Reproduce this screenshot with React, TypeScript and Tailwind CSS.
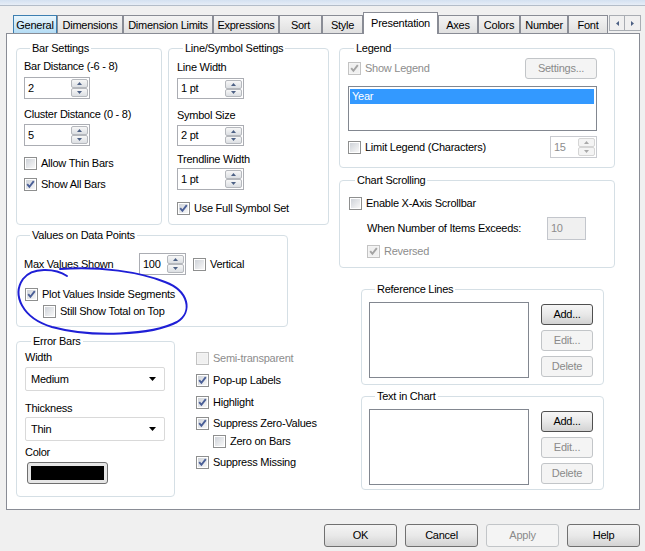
import React from "react";

type CheckProps = { checked?: boolean; disabled?: boolean };

const Check = ({ checked, disabled }: CheckProps) => (
  <span
    className={
      disabled
        ? "relative flex h-[13px] w-[13px] shrink-0 items-center justify-center border border-[#c3c3c3] bg-[#f4f4f4]"
        : "relative flex h-[13px] w-[13px] shrink-0 items-center justify-center border border-[#8e8f8f] bg-white"
    }
  >
    <span
      className={
        disabled
          ? "h-[9px] w-[9px] bg-[#f0f0f0]"
          : "h-[9px] w-[9px] bg-gradient-to-br from-[#cfd3d9] to-[#f8f8f8]"
      }
    />
    {checked && (
      <svg className="absolute left-0 top-0" width="11" height="11" viewBox="0 0 11 11">
        <path
          d="M2.2 5.2 L4.4 7.8 L8.8 2.2"
          fill="none"
          stroke={disabled ? "#a3a3a3" : "#4a5f97"}
          strokeWidth="1.9"
        />
      </svg>
    )}
  </span>
);

const CheckRow = ({
  label,
  checked,
  disabled,
  className = "",
}: CheckProps & { label: string; className?: string }) => (
  <div className={`flex h-[13px] items-center ${className}`}>
    <Check checked={checked} disabled={disabled} />
    <span className={disabled ? "ml-[4px] leading-[13px] text-[#8d8d8d]" : "ml-[4px] leading-[13px]"}>
      {label}
    </span>
  </div>
);

const SpinBtn = ({ up, disabled }: { up?: boolean; disabled?: boolean }) => (
  <div
    className={
      disabled
        ? "flex flex-1 items-center justify-center rounded-[2px] border border-[#d5d5d5] bg-[#f4f4f4]"
        : "flex flex-1 items-center justify-center rounded-[2px] border border-[#b5b8bd] bg-gradient-to-b from-[#f7f7f7] to-[#dcdfe3]"
    }
  >
    <svg width="5" height="3" viewBox="0 0 5 3">
      <path d={up ? "M0 3 L2.5 0 L5 3 Z" : "M0 0 L2.5 3 L5 0 Z"} fill={disabled ? "#a9a9a9" : "#4d6185"} />
    </svg>
  </div>
);

const Spin = ({
  value,
  className = "",
  disabled,
}: {
  value: string;
  className?: string;
  disabled?: boolean;
}) => (
  <div
    className={
      disabled
        ? `flex border border-[#c9cbd0] bg-white ${className}`
        : `flex border border-[#abadb3] bg-white ${className}`
    }
  >
    <span className={disabled ? "flex flex-1 items-center pl-[3px] text-[#8d8d8d]" : "flex flex-1 items-center pl-[3px]"}>
      {value}
    </span>
    <div className="my-[1px] mr-[1px] flex w-[17px] flex-col">
      <SpinBtn up disabled={disabled} />
      <SpinBtn disabled={disabled} />
    </div>
  </div>
);

const Select = ({ value }: { value: string }) => (
  <div className="flex h-[24px] w-[140px] items-center justify-between rounded-[2px] border border-[#d9d9d9] bg-white pl-[5px] pr-[8px]">
    <span>{value}</span>
    <svg width="7" height="4" viewBox="0 0 7 4">
      <path d="M0 0 L7 0 L3.5 4 Z" fill="#000" />
    </svg>
  </div>
);

const Btn = ({
  children,
  className = "",
  disabled,
  strong,
}: {
  children: React.ReactNode;
  className?: string;
  disabled?: boolean;
  strong?: boolean;
}) => {
  if (disabled)
    return (
      <div
        className={`flex items-center justify-center rounded-[3px] border border-[#c2c5c8] bg-[#f4f4f4] text-[#8a8a8a] ${className}`}
      >
        {children}
      </div>
    );
  return (
    <div
      className={
        strong
          ? `flex items-center justify-center rounded-[3px] border border-[#4f4f4f] bg-gradient-to-b from-[#f6f6f6] via-[#e8e8e8] to-[#d2d2d2] ${className}`
          : `flex items-center justify-center rounded-[3px] border border-[#707070] bg-gradient-to-b from-[#f4f4f4] via-[#e9e9e9] to-[#d3d3d3] ${className}`
      }
    >
      {children}
    </div>
  );
};

const Group = ({
  title,
  className = "",
  children,
}: {
  title: string;
  className?: string;
  children?: React.ReactNode;
}) => (
  <div className={`rounded-[4px] border border-[#d5dfe5] ${className}`}>
    <div className="-mt-[7px] ml-[6px] w-fit bg-white px-[2px] leading-[13px]">{title}</div>
    {children}
  </div>
);

const tabs = [
  { name: "General", w: "w-[44px]" },
  { name: "Dimensions", w: "w-[66px]" },
  { name: "Dimension Limits", w: "w-[90px]" },
  { name: "Expressions", w: "w-[66px]" },
  { name: "Sort", w: "w-[43px]" },
  { name: "Style", w: "w-[41px]" },
  { name: "Presentation", w: "w-[75px]" },
  { name: "Axes", w: "w-[40px]" },
  { name: "Colors", w: "w-[42px]" },
  { name: "Number", w: "w-[48px]" },
  { name: "Font", w: "w-[40px]" },
];

const TabBar = () => (
  <div className="mt-[6px] flex h-[21px] items-end pl-[13px]">
    {tabs.map((t) => {
      if (t.name === "Presentation")
        return (
          <div
            key={t.name}
            className={`relative z-10 -mb-[1px] flex h-[22px] items-center justify-center border border-b-0 border-[#898c95] bg-white pb-[1px] ${t.w}`}
          >
            {t.name}
          </div>
        );
      if (t.name === "General")
        return (
          <div
            key={t.name}
            className={`flex h-[18px] items-center justify-center border border-b-0 border-[#3c7fb1] bg-gradient-to-b from-[#eaf6fd] to-[#b3dcf4] pt-[2px] ${t.w}`}
          >
            {t.name}
          </div>
        );
      return (
        <div
          key={t.name}
          className={`flex h-[18px] items-center justify-center border border-b-0 border-[#898c95] bg-gradient-to-b from-[#f4f4f4] to-[#e0e0e0] pt-[2px] ${t.w}`}
        >
          {t.name}
        </div>
      );
    })}
    <div className="mb-[2px] ml-[1px] flex">
      <div className="flex h-[16px] w-[16px] items-center justify-center border border-[#a9adb3] bg-[#f0f0f0]">
        <svg width="3" height="5" viewBox="0 0 3 5">
          <path d="M3 0 L0 2.5 L3 5 Z" fill="#4d6185" />
        </svg>
      </div>
      <div className="flex h-[16px] w-[16px] items-center justify-center border border-l-0 border-[#a9adb3] bg-[#f0f0f0]">
        <svg width="3" height="5" viewBox="0 0 3 5">
          <path d="M0 0 L3 2.5 L0 5 Z" fill="#4d6185" />
        </svg>
      </div>
    </div>
  </div>
);

const LeftColumn = () => (
  <div className="flex w-[313px] flex-col">
    <div className="flex">
      <Group title="Bar Settings" className="h-[177px] w-[146px] pl-[7px]">
        <div className="mt-[5px] leading-[13px]">Bar Distance (-6 - 8)</div>
        <Spin value="2" className="mt-[4px] h-[22px] w-[66px]" />
        <div className="mt-[9px] leading-[13px]">Cluster Distance (0 - 8)</div>
        <Spin value="5" className="mt-[3px] h-[22px] w-[66px]" />
        <CheckRow label="Allow Thin Bars" className="mt-[11px]" />
        <CheckRow label="Show All Bars" checked className="mt-[8px]" />
      </Group>
      <Group title="Line/Symbol Settings" className="ml-[6px] h-[177px] w-[161px] pl-[8px]">
        <div className="mt-[6px] leading-[13px]">Line Width</div>
        <Spin value="1 pt" className="mt-[4px] h-[21px] w-[67px]" />
        <div className="mt-[10px] leading-[13px]">Symbol Size</div>
        <Spin value="2 pt" className="mt-[3px] h-[21px] w-[67px]" />
        <div className="mt-[7px] leading-[13px]">Trendline Width</div>
        <Spin value="1 pt" className="mt-[2px] h-[22px] w-[67px]" />
        <CheckRow label="Use Full Symbol Set" checked className="mt-[12px]" />
      </Group>
    </div>

    <Group title="Values on Data Points" className="mt-[10px] h-[92px] w-[272px] pl-[7px]">
      <div className="mt-[11px] flex h-[22px] items-center">
        <span className="w-[115px]">Max Values Shown</span>
        <Spin value="100" className="h-[22px] w-[47px]" />
        <CheckRow label="Vertical" className="ml-[7px]" />
      </div>
      <CheckRow label="Plot Values Inside Segments" checked className="ml-[1px] mt-[13px]" />
      <CheckRow label="Still Show Total on Top" className="ml-[19px] mt-[4px]" />
    </Group>

    <div className="mt-[14px] flex">
      <Group title="Error Bars" className="h-[156px] w-[159px] pl-[8px]">
        <div className="mt-[3px] leading-[13px]">Width</div>
        <div className="mt-[3px]">
          <Select value="Medium" />
        </div>
        <div className="mt-[11px] leading-[13px]">Thickness</div>
        <div className="mt-[2px]">
          <Select value="Thin" />
        </div>
        <div className="mt-[5px] leading-[13px]">Color</div>
        <div className="ml-[2px] mt-[3px] h-[22px] w-[81px] rounded-[3px] border border-[#6f6f6f] bg-[#e6e6e6] p-[3px]">
          <div className="h-full w-full bg-black" />
        </div>
      </Group>
      <div className="ml-[21px] mt-[11px] flex flex-col">
        <CheckRow label="Semi-transparent" disabled />
        <CheckRow label="Pop-up Labels" checked className="mt-[9px]" />
        <CheckRow label="Highlight" checked className="mt-[9px]" />
        <CheckRow label="Suppress Zero-Values" checked className="mt-[8px]" />
        <CheckRow label="Zero on Bars" className="ml-[17px] mt-[5px]" />
        <CheckRow label="Suppress Missing" checked className="mt-[8px]" />
      </div>
    </div>
  </div>
);

const ListWithButtons = () => (
  <div className="mt-[6px] flex">
    <div className="h-[76px] w-[160px] border border-[#828790] bg-white" />
    <div className="ml-[12px] mt-[2px] flex flex-col gap-[5px]">
      <Btn strong className="h-[21px] w-[52px]">Add...</Btn>
      <Btn disabled className="h-[21px] w-[52px]">Edit...</Btn>
      <Btn disabled className="h-[21px] w-[52px]">Delete</Btn>
    </div>
  </div>
);

const RightColumn = () => (
  <div className="ml-[10px] flex w-[276px] flex-col">
    <Group title="Legend" className="h-[120px] w-[276px] pl-[8px] pr-[17px]">
      <div className="mt-[3px] flex h-[21px] items-center justify-between">
        <CheckRow label="Show Legend" checked disabled />
        <Btn disabled className="h-[21px] w-[72px]">Settings...</Btn>
      </div>
      <div className="mt-[7px] h-[45px] w-[249px] border border-[#828790] bg-white p-[2px] pl-[1px]">
        <div className="h-[15px] bg-[#3399ff] pl-[2px] leading-[15px] text-white">Year</div>
      </div>
      <div className="mt-[5px] flex h-[22px] items-center justify-between">
        <CheckRow label="Limit Legend (Characters)" />
        <Spin value="15" disabled className="h-[22px] w-[47px]" />
      </div>
    </Group>

    <Group title="Chart Scrolling" className="mt-[12px] h-[88px] w-[276px] pl-[9px]">
      <CheckRow label="Enable X-Axis Scrollbar" className="mt-[10px]" />
      <div className="ml-[18px] mt-[7px] flex h-[23px] items-center">
        <span className="w-[180px]">When Number of Items Exceeds:</span>
        <div className="h-[23px] w-[39px] border border-[#c3c6cc] bg-[#f0f0f0] pl-[3px] pt-[2px] text-[#8d8d8d]">10</div>
      </div>
      <CheckRow label="Reversed" checked disabled className="ml-[18px] mt-[5px]" />
    </Group>

    <Group title="Reference Lines" className="ml-[22px] mt-[21px] h-[96px] w-[243px] pl-[7px]">
      <ListWithButtons />
    </Group>

    <Group title="Text in Chart" className="ml-[22px] mt-[11px] h-[94px] w-[243px] pl-[7px]">
      <ListWithButtons />
    </Group>
  </div>
);

const App = () => {
  return (
    <div className="relative h-[551px] w-[645px] overflow-hidden bg-[#f0f0f0] font-['Liberation_Sans',Arial,sans-serif] text-[11px] tracking-[-0.25px] text-black">
      <div className="h-[6px] border-b border-[#b3bdc9] bg-gradient-to-b from-[#d4e1f1] to-[#e7eef7]" />
      <TabBar />

      <div className="ml-[6px] flex h-[477px] w-[634px] border border-[#898c95] bg-white pl-[9px] pt-[14px]">
        <LeftColumn />
        <RightColumn />
      </div>

      <div className="mt-[14px] flex justify-end gap-[8px] pr-[5px]">
        <Btn className="h-[23px] w-[73px]">OK</Btn>
        <Btn className="h-[23px] w-[73px]">Cancel</Btn>
        <Btn disabled className="h-[23px] w-[73px]">Apply</Btn>
        <Btn className="h-[23px] w-[73px]">Help</Btn>
      </div>

      {/* hand drawn marker loop */}
      <svg className="pointer-events-none absolute left-0 top-0" width="645" height="551" viewBox="0 0 645 551">
        <path
          d="M67 276 C55 268, 32 267, 23 279 C12 295, 22 318, 52 327 C92 338, 152 335, 177 322 C193 312, 189 291, 165 282 C140 272, 100 266, 60 269"
          fill="none"
          stroke="#1f1fd6"
          strokeWidth="2"
          strokeLinecap="round"
        />
      </svg>
    </div>
  );
};

export default App;
